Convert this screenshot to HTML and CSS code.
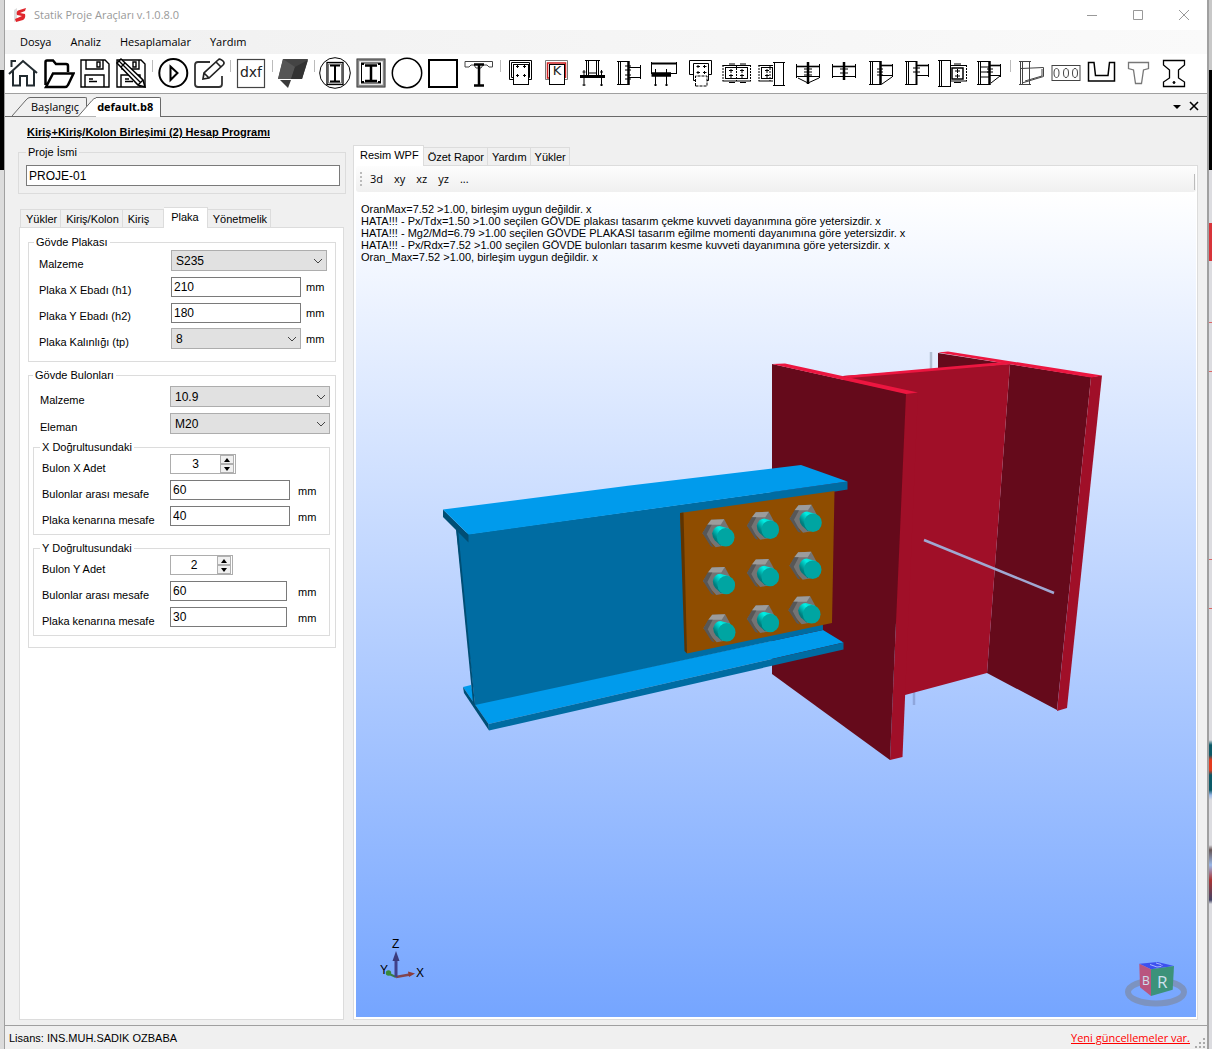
FILE: index.html
```html
<!DOCTYPE html>
<html lang="tr">
<head>
  <meta charset="UTF-8">
  <title>Statik Proje Araçları v.1.0.8.0</title>
  <link rel="stylesheet" href="styles.css">
</head>
<body>

<div class="window">

  <!-- Title bar -->
  <header class="titlebar">
    <svg class="logo" viewBox="0 0 14 16"><path d="M1 3L4 1V13L1 15Z" fill="#ddd"/><path d="M13 1L5 3.500Q3 5 4 8L9 9L2 12L3 15L10 13Q13 11 12 7L7 6L12 4Z" fill="#e0262c"/></svg>
    <span class="title">Statik Proje Araçları v.1.0.8.0</span>
    <button class="win-btn" aria-label="Simge durumuna küçült"><svg viewBox="0 0 12 12"><path d="M1 6.500H11"/></svg></button>
    <button class="win-btn" aria-label="Ekranı kapla"><svg viewBox="0 0 12 12"><path d="M1.500 1.500H10.500V10.500H1.500Z"/></svg></button>
    <button class="win-btn" aria-label="Kapat"><svg viewBox="0 0 12 12"><path d="M1 1L11 11M11 1L1 11"/></svg></button>
  </header>

  <nav class="menu">
    <button>Dosya</button>
    <button>Analiz</button>
    <button>Hesaplamalar</button>
    <button>Yardım</button>
  </nav>

  <!-- Toolbar -->
  <div class="toolbar">
    <button aria-label="Başlangıç"><svg viewBox="0 0 32 32"><path d="M2 17L16 4L30 16M4.500 10V4H9M6 14V28.500H13V19H20V28.500H27V14" stroke="#222b30" stroke-width="2"/></svg></button>
    <button aria-label="Aç"><svg viewBox="0 0 32 32"><path d="M2.500 28V5Q2.500 3.500 4 3.500H10L13 7H23Q25 7 25 9V15M3 30L10 16.500H30.500L25 28Q24 30 22 30Z" stroke-width="2.500"/></svg></button>
    <button aria-label="Kaydet"><svg viewBox="0 0 32 32"><path d="M2 3H26L30 7V30H2ZM7 3V12H24V3M18 5H21V10H18ZM6 30V18H25V30M10 22H14M10 24.500H18" stroke-width="1.400"/></svg></button>
    <button aria-label="Farklı kaydet"><svg viewBox="0 0 32 32"><path d="M2 3H26L30 7V30H2ZM7 3V12H24V3M18 5H21V10H18ZM6 30V18H25V30M10 22H14M10 24.500H18" stroke-width="1.400"/><path d="M2 6L6 2L28 23L30 30L23 28Z" fill="#fff" stroke-width="1.500"/><path d="M6 10L10 6M4 4L26 26M23 28L28 23" stroke-width="1.300"/></svg></button>
    <span class="sep"></span>
    <button aria-label="Hesapla"><svg viewBox="0 0 32 32"><circle cx="16.300" cy="16" r="14" stroke-width="2"/><path d="M13.500 9.500L20.500 16L13.500 23Z" stroke-width="2"/></svg></button>
    <button aria-label="Düzenle"><svg viewBox="0 0 32 32"><path d="M17 5H5Q2 5 2 8V27Q2 30 5 30H26Q29 30 29 27V19" stroke="#333" stroke-width="1.800"/><path d="M10 22L11 16L25 3Q27 1 30 4Q32 6 30 8L16 21ZM23 5L28 10M11 16L16 21" stroke="#222" stroke-width="1.700"/></svg></button>
    <span class="sep"></span>
    <button aria-label="dxf"><svg viewBox="0 0 32 32"><rect x="2.500" y="2.500" width="27" height="28" stroke="#444" stroke-width="1.200"/><text x="16" y="20" font-size="14" text-anchor="middle">dxf</text></svg></button>
    <span class="sep"></span>
    <button aria-label="Yüzey"><svg viewBox="0 0 32 32" class="solid"><path d="M6 2H31L25 22H1Z" fill="#444"/><path d="M6 2L18 10L14 22H1Z" fill="#555"/><path d="M18 10L31 3L25 22H14Z" fill="#333"/><path d="M3 23H14L11 31Z" fill="#3a3a3a"/></svg></button>
    <span class="sep"></span>
    <button aria-label="Yuvarlak kolon profili"><svg viewBox="0 0 32 32"><circle cx="16" cy="16" r="15.300"/><rect x="8" y="5.500" width="16" height="22" stroke-width="1.300"/><path d="M9.500 26V7H22.500V26Z" stroke="#777"/><path d="M11 8.500H21M11 24.500H21M16 8.500V24.500" stroke-width="2"/></svg></button>
    <button aria-label="Kare kolon profili"><svg viewBox="0 0 32 32"><rect x="3" y="3" width="26" height="26" stroke="#888" stroke-width="2.500"/><rect x="2" y="2" width="28" height="28" stroke="#444"/><rect x="6.500" y="6" width="19" height="20"/><path d="M10 8.500H22M10 24H22M16 8.500V24" stroke-width="2.500"/><path d="M7 7H9M23 7H25M7 25H9M23 25H25" stroke-width="2"/></svg></button>
    <button aria-label="Daire"><svg viewBox="0 0 32 32"><circle cx="16" cy="16" r="14.700" stroke-width="1.500"/></svg></button>
    <button aria-label="Kare"><svg viewBox="0 0 32 32"><rect x="2" y="3" width="28" height="27" stroke-width="2"/></svg></button>
    <button aria-label="Kompozit kiriş"><svg viewBox="0 0 32 32"><path d="M2 10V4.500H29.500V10H26L24 8H20L18 11H13L11 8H8L6 10Z" stroke="#444"/><path d="M11 7.500H21M16 7V28M11 28.500H21" stroke-width="2.500"/></svg></button>
    <span class="sep"></span>
    <button aria-label="Levha bulonlu"><svg viewBox="0 0 32 32"><path d="M8 22.500H4.500V3.500H26.500V22.500H23.500M8 20.500H6.500V5.500H24.500V20.500H23.500"/><rect x="8.500" y="7.500" width="15" height="20"/><path d="M11 9.500H14M12.500 8V11M18 9.500H21M19.500 8V11M11 18.500H14M12.500 17V20M18 18.500H21M19.500 17V20"/></svg></button>
    <button aria-label="Levha kaynaklı"><svg viewBox="0 0 32 32"><path d="M8 22.500H4.500V3.500H26.500V22.500H23.500" stroke="#777"/><path d="M8 21H6.500V6H24.500V21" stroke="#c22" stroke-width="1.500"/><rect x="8.500" y="7.500" width="15" height="20" fill="#fff"/><text x="16" y="18" font-size="13" text-anchor="middle">K</text></svg></button>
    <button aria-label="Kolon ayağı"><svg viewBox="0 0 32 32"><path d="M8 3.500H23M9.500 4V19M11.500 4V19M19.500 4V19M21.500 4V19M7 13V29M24.500 13V29M5.500 15H8.500M23 15H26M5.500 28H8.500M23 28H26M12 16H20"/><path d="M3 19.500H28" stroke-width="3"/></svg></button>
    <button aria-label="Alın levhalı birleşim"><svg viewBox="0 0 32 32"><path d="M4 4.500H16M4 27.500H16M5.500 4V27M7.500 4V27M16 10.500H28M16 20.500H28M27.500 8V22M12 9H18M12 13H18M12 18H18M12 22H18"/><path d="M15.500 4V28" stroke-width="2.500"/></svg></button>
    <button aria-label="Ankrajlı plaka"><svg viewBox="0 0 32 32"><path d="M2.500 5V17M27.500 5V17M20 16.500H28M6.500 12V29M17.500 12V29M5 28H8M16 28H19"/><path d="M2 6.500H28" stroke-width="2"/><path d="M2.500 17.500H22" stroke-width="4.500"/></svg></button>
    <button aria-label="Mafsallı kolon"><svg viewBox="0 0 32 32"><path d="M8 17.500H4.500V3.500H26.500V17.500H24M10 23.500H8.500V6.500H23.500V23.500H22"/><path d="M10.500 29V19H22V29Z" stroke-dasharray="3 1"/><path d="M11.500 9.500H15M13 8V11M18 9.500H21.500M19.500 8V11M11.500 15.500H15M13 14V17M18 15.500H21.500M19.500 14V17"/></svg></button>
    <button aria-label="Kiriş eki"><svg viewBox="0 0 32 32"><path d="M1.500 8.500H30M1.500 24H30M8 7H14M19 7H25M8 25.500H14M19 25.500H25"/><path d="M2 8V24M29.500 8V24M15.500 8V24" stroke-dasharray="2 1"/><rect x="4.500" y="10.500" width="22" height="11"/><path d="M8 13.500H12M10 12V16M19 13.500H23M21 12V16M8 18.500H12M10 17V21M19 18.500H23M21 17V21"/></svg></button>
    <button aria-label="Kiriş kolon"><svg viewBox="0 0 32 32"><path d="M1.500 8.500H16M1.500 24H16"/><path d="M2 8V24M13 8V24" stroke-dasharray="2 1"/><rect x="4.500" y="10.500" width="11" height="11"/><path d="M8 13.500H12M10 12V16M8 18.500H12M10 17V21"/><path d="M16 5.500H28M16 28.500H28M17.500 6V28M26.500 6V28"/></svg></button>
    <button aria-label="Guseli kiriş eki"><svg viewBox="0 0 32 32"><path d="M3.500 7V21M26.500 7V21M3.500 19.500H26.500M5 21L15 26L26 21M11 12H19M11 15H19M11 18H19"/><path d="M3 9.500H27" stroke-width="1.600"/><path d="M15 5V27" stroke-width="2.500"/></svg></button>
    <button aria-label="Alın levhalı kiriş eki"><svg viewBox="0 0 32 32"><path d="M3.500 7V21M26.500 7V21M3.500 19.500H26.500M11 12H19M11 16H19"/><path d="M3 9.500H27" stroke-width="1.600"/><path d="M15 5V23" stroke-width="2.500"/></svg></button>
    <button aria-label="Guseli kolon kiriş"><svg viewBox="0 0 32 32"><path d="M4 4.500H16M4 27.500H16M5.500 4V27M7.500 4V27M16 18.500H28M27.500 7V20M17 27L27 20M12 12H18M12 15H18M12 18H18"/><path d="M16 8.500H28" stroke-width="1.600"/><path d="M15.500 4V28" stroke-width="2.500"/></svg></button>
    <button aria-label="Kolon kiriş"><svg viewBox="0 0 32 32"><path d="M4 4.500H16M4 27.500H16M5.500 4V27M7.500 4V27M16 18.500H28M27.500 7V20M12 11H19M12 15H19"/><path d="M16 8.500H28" stroke-width="1.600"/><path d="M15.500 4V28" stroke-width="2"/></svg></button>
    <button aria-label="Başlık levhalı birleşim"><svg viewBox="0 0 32 32"><path d="M1 3.500H14M1 29.500H14M2.500 4V29M4.500 4V29M13.500 4V29M14 8.500H30M14 24H30M17 7H24M17 25.500H24"/><path d="M29.500 8V24" stroke-dasharray="2 1"/><rect x="15" y="11" width="11" height="11" stroke-width="1.500"/><path d="M18 14H23M20.500 12V16M18 19H23M20.500 17V21"/></svg></button>
    <button aria-label="Rijitlikli birleşim"><svg viewBox="0 0 32 32"><path d="M4 4.500H17M4 27.500H17M5.500 4V27M7.500 4V27M7 10H17M7 15H17M7 20H17M17 18.500H28M27.500 7V20M18 26L27 19M14 12H20M14 15H20"/><path d="M17 8.500H28" stroke-width="1.600"/><path d="M16.500 4V28" stroke-width="2.500"/></svg></button>
    <span class="sep"></span>
    <button aria-label="Guse"><svg viewBox="0 0 32 32"><path d="M4 4.500H16M4 27.500H16M5.500 4V27M7.500 4V27M14.500 4V27M6 11.500L28.500 10.500V19.500L7 26M27 12V19L10 24" stroke="#444"/></svg></button>
    <button aria-label="Petek kiriş"><svg viewBox="0 0 32 32"><rect x="1" y="8.500" width="28" height="15" stroke="#444"/><g stroke="#444"><ellipse cx="5.500" cy="16" rx="2.500" ry="4.500"/><ellipse cx="15" cy="16" rx="2.500" ry="4.500"/><ellipse cx="24" cy="16" rx="2.500" ry="4.500"/></g></svg></button>
    <button aria-label="U kesit"><svg viewBox="0 0 32 32"><path d="M1.500 5.500H7L8.500 18.500H21L22.500 5.500H27.500V24H1.500Z" stroke-width="1.500"/></svg></button>
    <button aria-label="T kesit"><svg viewBox="0 0 32 32"><path d="M5.500 5.500H25.500V11.500L20.500 13L18.500 26.500H12.500L10.500 13L5.500 11.500Z" stroke="#777" stroke-width="1.300"/></svg></button>
    <button aria-label="I kesit"><svg viewBox="0 0 32 32"><path d="M4.500 3.500H25.500V8L19.500 13V21L25.500 25V29.500H4.500V25L10.500 21V13L4.500 8Z" stroke-width="1.300"/><circle cx="15" cy="25.500" r="1" fill="#000"/></svg></button>
  </div>

  <!-- Open documents -->
  <div class="doc-tabs">
    <button class="doc-tab"><svg viewBox="0 0 18 19"><path d="M0 19L14 3Q16 .5 18 .5V19Z" stroke="none"/><path d="M0 19L14 3Q16 .5 18 .5" fill="none"/></svg><span>Başlangıç</span></button>
    <button class="doc-tab current"><svg viewBox="0 0 18 19"><path d="M0 19L14 3Q16 .5 18 .5V19Z" stroke="none"/><path d="M0 19L14 3Q16 .5 18 .5" fill="none"/></svg><span>default.b8</span></button>
    <button class="doc-btn push" aria-label="Sekme listesi"><svg viewBox="0 0 10 10"><path d="M1 4H9L5 8Z" fill="#000"/></svg></button>
    <button class="doc-btn" aria-label="Sekmeyi kapat"><svg viewBox="0 0 10 10"><path d="M1 1L9 9M9 1L1 9" stroke="#000" stroke-width="1.600"/></svg></button>
  </div>

  <main class="content">

    <form class="inputs">
      <h1>Kiriş+Kiriş/Kolon Birleşimi (2) Hesap Programı</h1>

      <fieldset class="project">
        <legend>Proje İsmi</legend>
        <input type="text" aria-label="Proje İsmi" value="PROJE-01">
      </fieldset>

      <div class="tabs form-tabs">
        <button type="button">Yükler</button>
        <button type="button">Kiriş/Kolon</button>
        <button type="button" class="wide">Kiriş</button>
        <button type="button" class="active">Plaka</button>
        <button type="button">Yönetmelik</button>
      </div>

      <div class="page">
        <fieldset class="plate">
          <legend>Gövde Plakası</legend>
          <div class="row">
            <label for="plateMaterial">Malzeme</label>
            <div class="select long"><select id="plateMaterial"><option>S235</option></select><svg viewBox="0 0 10 6"><path d="M1 1L5 5L9 1"/></svg></div>
          </div>
          <div class="row">
            <label for="plateX">Plaka X Ebadı (h1)</label>
            <input type="text" id="plateX" value="210">
            <span class="unit">mm</span>
          </div>
          <div class="row">
            <label for="plateY">Plaka Y Ebadı (h2)</label>
            <input type="text" id="plateY" value="180">
            <span class="unit">mm</span>
          </div>
          <div class="row">
            <label for="plateT">Plaka Kalınlığı (tp)</label>
            <div class="select"><select id="plateT"><option>8</option></select><svg viewBox="0 0 10 6"><path d="M1 1L5 5L9 1"/></svg></div>
            <span class="unit">mm</span>
          </div>
        </fieldset>

        <fieldset class="bolts">
          <legend>Gövde Bulonları</legend>
          <div class="row">
            <label for="boltMaterial">Malzeme</label>
            <div class="select long"><select id="boltMaterial"><option>10.9</option></select><svg viewBox="0 0 10 6"><path d="M1 1L5 5L9 1"/></svg></div>
          </div>
          <div class="row">
            <label for="boltType">Eleman</label>
            <div class="select long"><select id="boltType"><option>M20</option></select><svg viewBox="0 0 10 6"><path d="M1 1L5 5L9 1"/></svg></div>
          </div>

          <fieldset class="direction">
            <legend>X Doğrultusundaki</legend>
            <div class="row">
              <label for="boltX">Bulon X Adet</label>
              <div class="spin">
                <input type="number" id="boltX" value="3">
                <div class="arrows"><button type="button" aria-label="Artır"><svg viewBox="0 0 6 4"><path d="M0 4L3 0L6 4Z"/></svg></button><button type="button" aria-label="Azalt"><svg viewBox="0 0 6 4"><path d="M0 0L3 4L6 0Z"/></svg></button></div>
              </div>
            </div>
            <div class="row">
              <label for="boltXGap">Bulonlar arası mesafe</label>
              <input type="text" id="boltXGap" value="60">
              <span class="unit">mm</span>
            </div>
            <div class="row">
              <label for="boltXEdge">Plaka kenarına mesafe</label>
              <input type="text" id="boltXEdge" value="40">
              <span class="unit">mm</span>
            </div>
          </fieldset>

          <fieldset class="direction narrow">
            <legend>Y Doğrultusundaki</legend>
            <div class="row">
              <label for="boltY">Bulon Y Adet</label>
              <div class="spin">
                <input type="number" id="boltY" value="2">
                <div class="arrows"><button type="button" aria-label="Artır"><svg viewBox="0 0 6 4"><path d="M0 4L3 0L6 4Z"/></svg></button><button type="button" aria-label="Azalt"><svg viewBox="0 0 6 4"><path d="M0 0L3 4L6 0Z"/></svg></button></div>
              </div>
            </div>
            <div class="row">
              <label for="boltYGap">Bulonlar arası mesafe</label>
              <input type="text" id="boltYGap" value="60">
              <span class="unit">mm</span>
            </div>
            <div class="row">
              <label for="boltYEdge">Plaka kenarına mesafe</label>
              <input type="text" id="boltYEdge" value="30">
              <span class="unit">mm</span>
            </div>
          </fieldset>
        </fieldset>
      </div>
    </form>

    <section class="results">
      <div class="tabs">
        <button class="active">Resim WPF</button>
        <button>Özet Rapor</button>
        <button>Yardım</button>
        <button>Yükler</button>
      </div>

      <div class="page view-page">
        <div class="view-bar">
          <i class="grip"></i>
          <button>3d</button>
          <button>xy</button>
          <button>xz</button>
          <button>yz</button>
          <button>...</button>
        </div>

        <div class="viewport">
          <!-- 3D model -->
          <svg class="model" viewBox="356 192 840 825">
            <defs>
              <linearGradient id="rod" x1="0" y1="1" x2="1" y2="0">
                <stop offset="0" stop-color="#006a6a"/>
                <stop offset=".3" stop-color="#008080"/>
                <stop offset=".65" stop-color="#00f0e6"/>
                <stop offset="1" stop-color="#00c8c0"/>
              </linearGradient>
              <g id="bolt">
                <path d="M-23.300 -4L-14.500 -17.500L-1.500 -18L6 -4L1 8L-10 10Z" fill="#747474"/>
                <path d="M-18.500 -12.500L-14.500 -17.500L-1.500 -18L-5 -12.500Z" fill="#9c9c9c"/>
                <path d="M-23.300 -4L-18.500 -12.500L-14 -12.500L-19 -3L-12 10L-15 9Z" fill="#575757"/>
                <path d="M-13.500 -4Q-12 -11 -6 -11.300L3 -8.800L-5 8.500L-11 3Q-13.500 0 -13.500 -4Z" fill="url(#rod)"/>
                <ellipse rx="8.800" ry="9.300" fill="#00a5a2"/>
              </g>
            </defs>

            <!-- column -->
            <path d="M931 352V372" stroke="#b3c0d3" stroke-width="2.500"/>
            <path d="M914 690V705" stroke="#8fa6dc" stroke-width="2.500"/>
            <path d="M938 353L1091 377L1057 710L987 673L1010 364L938 369Z" fill="#650a1b"/>
            <path d="M1091 377L1102 375.500L1067 708L1057 711Z" fill="#a00f28"/>
            <path d="M938 352.500L948 351.500L1102 375.500L1091 377.500Z" fill="#ec1640"/>
            <path d="M843 376L1010 364L987 673L905 695L880 500Z" fill="#a00f28"/>
            <path d="M843 376L1003 362L1013 364L850 378Z" fill="#ec1640"/>
            <path d="M906 393L918 392L902.500 757L890 760Z" fill="#a00f28"/>
            <path d="M772 364L906 393.500L890 760L772 674Z" fill="#650a1b"/>
            <path d="M772 364L785 363.500L918 392.500L906 394Z" fill="#ec1640"/>
            <path d="M924 540L1054 593" stroke="#a0a8d2" stroke-width="2.500"/>

            <!-- beam -->
            <path d="M463 687L471 685L475 704L823 630L843.500 642.500L488.500 724Z" fill="#009bec"/>
            <path d="M488.500 724L843.500 642.500V649.500L489 730.500Z" fill="#006ca2"/>
            <path d="M463 687L488.500 724L489 730.500L464 693Z" fill="#004e75"/>
            <path d="M456 527L469 534L847.500 481.500V489.500L820 494L823 630L475 705Z" fill="#006ca2"/>
            <path d="M456 529L458 529L475 705L473 703Z" fill="#004e75"/>
            <path d="M443 509.500L468.500 534.500V542.500L443 517Z" fill="#004e75"/>
            <path d="M443 509.500L630 485.500L801 465L847.500 481.500L468.500 534.500Z" fill="#009bec"/>

            <!-- plate and bolts -->
            <path d="M680 513L834.500 491L832 623L687 653.500Z" fill="#8f4d00"/>
            <path d="M680 513L683.500 512.500L687 653.500L684.500 651Z" fill="#5f3400"/>
            <use href="#bolt" x="725.700" y="537.300"/>
            <use href="#bolt" x="770.300" y="529.700"/>
            <use href="#bolt" x="813" y="522.700"/>
            <use href="#bolt" x="726.300" y="585"/>
            <use href="#bolt" x="770.300" y="577"/>
            <use href="#bolt" x="812.700" y="569.700"/>
            <use href="#bolt" x="726.700" y="632.300"/>
            <use href="#bolt" x="770.300" y="623"/>
            <use href="#bolt" x="811.700" y="614.300"/>
          </svg>

          <p class="log">OranMax=7.52 &gt;1.00, birleşim uygun değildir. x<br>
            HATA!!! - Px/Tdx=1.50 &gt;1.00 seçilen GÖVDE plakası tasarım çekme kuvveti dayanımına göre yetersizdir. x<br>
            HATA!!! - Mg2/Md=6.79 &gt;1.00 seçilen GÖVDE PLAKASI tasarım eğilme momenti dayanımına göre yetersizdir. x<br>
            HATA!!! - Px/Rdx=7.52 &gt;1.00 seçilen GÖVDE bulonları tasarım kesme kuvveti dayanımına göre yetersizdir. x<br>
            Oran_Max=7.52 &gt;1.00, birleşim uygun değildir. x</p>

          <!-- coordinate axes -->
          <svg class="axes" viewBox="0 0 50 50">
            <path d="M20 41L11 37" stroke="#3a7d45" stroke-width="2"/>
            <circle cx="12.500" cy="37" r="2.700" fill="#3a8a3a"/>
            <path d="M20 41L34 38.500" stroke="#804550" stroke-width="2.500"/>
            <path d="M32 35.500L39 37.500L33 41Z" fill="#8a3c3c"/>
            <path d="M20 41V22" stroke="#41418a" stroke-width="3"/>
            <path d="M16.500 25L20 15L23.500 25Z" fill="#3b3b7c"/>
            <text x="16" y="12">Z</text>
            <text x="4" y="38">Y</text>
            <text x="40" y="41">X</text>
          </svg>

          <!-- view cube -->
          <svg class="cube" viewBox="0 0 64 50">
            <ellipse cx="32" cy="32" rx="28" ry="11.500" fill="none" stroke="#7c93c0" stroke-width="6"/>
            <path d="M15.300 3.700L33.700 2L50 6L27 9.300Z" fill="#3d50f0"/>
            <path d="M15.300 3.700L27 9.300V36L16 27.300Z" fill="#b9557f"/>
            <path d="M27 9.300L50 6L48.700 29.700L27 36Z" fill="#3c927a"/>
            <path d="M26 4.500L33 7L37 6.500Q39 5.500 37 4.500L32 3" fill="none" stroke="#a9b8ff"/>
            <text x="33" y="28" font-size="17">R</text>
            <text x="18" y="25" font-size="12">B</text>
          </svg>
        </div>
      </div>
    </section>
  </main>

  <footer class="statusbar">
    <span>Lisans: INS.MUH.SADIK OZBABA</span>
    <a href="#">Yeni güncellemeler var.</a>
    <svg class="resize" viewBox="0 0 12 12"><path d="M9 1h2v2h-2zM5 5h2v2h-2zM9 5h2v2h-2zM1 9h2v2h-2zM5 9h2v2h-2zM9 9h2v2h-2z" fill="#aaa"/></svg>
  </footer>
</div>

</body>
</html>
```
FILE: styles.css
```css
* { box-sizing: border-box; }
body {
  margin: 0;
  min-height: 100vh;
  display: flex;
  padding: 0 3px 0 4px;
  font: 11px/14px "Liberation Sans", Arial, sans-serif;
  color: #000;
  background:
    linear-gradient(#d8d8d8 70px, #000 70px, #000 170px, #dcdcdc 170px) left / 4px 100% no-repeat,
    linear-gradient(#c8c8c8 70px, #000 70px, #000 170px, #dcdce0 170px, #dcdce0 223px, #d8343a 223px, #d8343a 261px, #dcdce0 261px, #dcdce0 322px, #d66 322px, #d66 323px, #dcdce0 323px, #dcdce0 371px, #d66 371px, #d66 372px, #dcdce0 372px, #dcdce0 559px, #d66 559px, #d66 560px, #dcdce0 560px, #dcdce0 608px, #d66 608px, #d66 609px, #dcdce0 609px, #dcdce0 740px, #0c5a68 745px, #0c5a68 755px, #e33b1e 760px, #e33b1e 770px, #0c5a68 775px, #0c5a68 790px, #9ab8e8 795px, #dcdce0 800px, #dcdce0 845px, #655 850px, #9ab8e8 865px, #a33 880px, #446 900px, #dcdce0 904px) right / 3px 100% no-repeat;
}
button { border: 0; padding: 0; background: none; font: inherit; color: inherit; }
h1, p { margin: 0; }

.window { flex: 1; min-width: 0; display: flex; flex-direction: column; background: #f0f0f0; border: solid #a0a0a0; border-width: 0 2px 0 1px; }

/* title bar and menu */
.titlebar { height: 30px; display: flex; align-items: center; padding-left: 8px; background: #fff; font: 11px/16px "Open Sans", sans-serif; color: #999; }
.logo { width: 14px; height: 16px; margin-right: 7px; }
.title { flex: 1; }
.win-btn { width: 46px; height: 30px; display: grid; place-items: center; }
.win-btn svg { width: 12px; height: 12px; fill: none; stroke: #999; }
.menu { height: 24px; display: flex; align-items: center; gap: 19px; padding-left: 15px; background: linear-gradient(90deg, #f0f0f0, #fafafa); font: 11px/16px "Open Sans", sans-serif; }

.toolbar { height: 39px; display: flex; align-items: flex-start; background: #fff; }
.toolbar button { width: 36px; height: 38px; flex: none; display: grid; place-items: center; }
.toolbar svg { width: 32px; height: 32px; fill: none; stroke: #000; stroke-width: 1; }
.toolbar .solid { stroke: none; }
.toolbar text { fill: #222; stroke: none; font-family: "DejaVu Sans", sans-serif; }
.sep { width: 6px; height: 12px; flex: none; margin-top: 6px; background: linear-gradient(#bbb, #bbb) center / 1px 100% no-repeat; }

/* document tabs */
.doc-tabs { height: 24px; display: flex; align-items: flex-end; padding: 0 5px 0 7px; border: solid #696969; border-width: 1px 0; border-top-color: #a0a0a0; font: 11px/18px "Open Sans", sans-serif; }
.doc-tab { display: flex; height: 19px; }
.doc-tab svg { width: 18px; height: 19px; fill: #f0f0f0; stroke: #696969; }
.doc-tab span { height: 19px; padding: 0 7px 0 1px; background: #f0f0f0; border: solid #696969; border-width: 1px 1px 0 0; border-radius: 0 2px 0 0; }
.doc-tab.current { margin: 0 0 -1px -9px; height: 20px; font-weight: bold; position: relative; }
.doc-tab.current svg { height: 20px; fill: #fff; }
.doc-tab.current span { height: 20px; background: #fff; }
.doc-btn { width: 17px; height: 20px; display: grid; place-items: center; }
.doc-btn svg { width: 10px; height: 10px; }
.push { margin-left: auto; }

.content { flex: 1; display: grid; grid-template-columns: 328px 1fr; gap: 7px; padding: 0 9px 5px 13px; }
.inputs { display: flex; flex-direction: column; padding-top: 8px; }
.results { display: flex; flex-direction: column; padding-top: 28px; min-width: 0; }
h1 { padding-left: 9px; font-size: 11px; line-height: 14px; text-decoration: underline; }

fieldset { margin: 0; min-width: 0; border: 1px solid #dcdcdc; }
legend { margin: 0; padding: 0 2px; height: 14px; }
input { width: 100%; height: 20px; padding: 0 2px; border: 1px solid #7a7a7a; border-radius: 0; background: #fff; font: 12px/16px "Liberation Sans", Arial, sans-serif; color: #000; }
.project { margin-top: 6px; padding: 6px 5px 7px 7px; }
.project input { display: block; height: 21px; }

/* tabs */
.tabs { display: flex; align-items: flex-end; height: 21px; margin-bottom: -1px; position: relative; }
.tabs button { height: 18px; padding: 1px 3px 0 4px; margin-bottom: 1px; border: solid #dcdcdc; border-width: 1px 1px 0 0; }
.tabs button:first-child { border-left-width: 1px; }
.tabs .active { height: 21px; margin: 0; padding: 0 4px 2px 6px; background: #fff; }
.form-tabs { margin-top: 13px; padding-left: 2px; }
.form-tabs button { padding-left: 5px; }
.form-tabs .wide { padding-right: 14px; }
.form-tabs .active { padding: 0 8px 2px 7px; }
.page { flex: 1; display: flex; flex-direction: column; gap: 6px; background: #fff; border: 1px solid #dcdcdc; }
.inputs .page { margin: 0 2px 0 1px; padding: 7px 7px 0 8px; }

/* form rows */
.row { display: grid; grid-template-columns: 132px 130px 1fr; align-items: end; height: 21px; }
.unit { align-self: center; padding-left: 5px; }
.plate { display: grid; gap: 5px; padding: 1px 8px 12px 10px; }
.plate legend { margin-left: -5px; }
.bolts { display: grid; gap: 6px; padding: 4px 5px 11px 4px; }
.bolts > .row { grid-template-columns: 130px 160px; padding-left: 7px; }
.direction { display: grid; gap: 5px; padding: 0 4px 7px 8px; }
.direction legend { margin-left: -2px; }
.direction .row { grid-template-columns: 128px 120px 1fr; }
.direction .row > input { align-self: start; }
.direction .unit { padding-left: 8px; }
.narrow .row { grid-template-columns: 128px 117px 1fr; }
.narrow .unit { padding-left: 11px; }
.select { position: relative; height: 21px; }
.plate .long { grid-column: 2 / 4; width: 156px; }
.select select { width: 100%; height: 21px; padding: 0 4px; appearance: none; border: 1px solid #adadad; border-radius: 0; background: #e1e1e1; font: 12px/16px "Liberation Sans", Arial, sans-serif; color: #000; }
.select svg { position: absolute; right: 4px; top: 8px; width: 10px; height: 6px; fill: none; stroke: #444; pointer-events: none; }
.spin { display: flex; width: 66px; height: 20px; align-self: start; background: #fff; border: 1px solid #adadad; }
.narrow .spin { width: 63px; }
.spin input { flex: 1; min-width: 0; height: 18px; border: 0; text-align: center; appearance: textfield; }
.spin input::-webkit-inner-spin-button { appearance: none; }
.arrows { display: grid; width: 15px; padding-right: 1px; }
.arrows button { display: grid; place-items: center; background: #f0f0f0; border: 1px solid #b0b0b0; }
.arrows svg { width: 6px; height: 4px; }

/* 3D view */
.view-page { gap: 0; padding: 0 1px 2px 2px; }
.view-bar { height: 26px; display: flex; align-items: center; gap: 11px; padding-left: 4px; background: linear-gradient(#bbb, #bbb) right 1px bottom 2px / 1px 16px no-repeat, linear-gradient(#fdfdfd, #f0f0f0); border-radius: 3px; font: 11px/16px "Open Sans", sans-serif; }
.grip { width: 2px; height: 15px; background: repeating-linear-gradient(#bbb 0 2px, transparent 2px 4px); margin-right: -3px; }
.viewport { flex: 1; position: relative; background: linear-gradient(#fff, #75a5ff); }
.model { position: absolute; inset: 0; width: 100%; height: 100%; }
.log { position: relative; padding: 11px 5px; line-height: 12px; }
.axes { position: absolute; left: 20px; bottom: 31px; width: 50px; height: 50px; font-size: 12px; }
.cube { position: absolute; right: 8px; bottom: 7px; width: 64px; height: 50px; }
.cube text { fill: #cfe0ee; font-family: "Open Sans", sans-serif; }

.statusbar { height: 24px; display: flex; align-items: center; gap: 4px; padding: 0 1px 0 4px; border-top: 1px solid #a0a0a0; }
.statusbar a { margin-left: auto; font: 11px/16px "Open Sans", sans-serif; color: #f00; }
.resize { width: 12px; height: 12px; align-self: flex-end; }
```
